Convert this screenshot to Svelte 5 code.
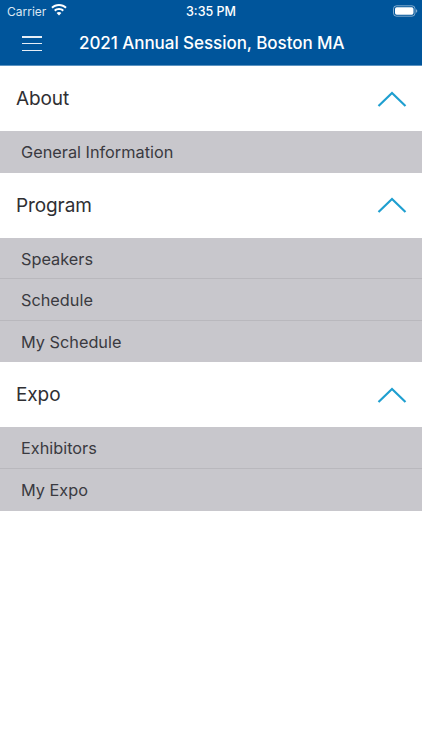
<script>
	const sections = [
		{ title: 'About', items: ['General Information'] },
		{ title: 'Program', items: ['Speakers', 'Schedule', 'My Schedule'] },
		{ title: 'Expo', items: ['Exhibitors', 'My Expo'] }
	];
</script>

<div class="page">
	<header>
		<div class="status">
			<div class="carrier">
				<span>Carrier</span>
				<svg width="16" height="12" viewBox="0 0 16 12" fill="#fff">
					<path d="M8 0C5 0 2.300 1.200.3 3.100l1.400 1.500C3.300 3 5.500 2.100 8 2.100s4.700.9 6.300 2.500l1.400-1.500C13.700 1.200 11 0 8 0z" />
					<path d="M8 4c-1.900 0-3.600.7-4.900 1.900l1.400 1.500C5.400 6.600 6.600 6.100 8 6.100s2.600.5 3.500 1.300l1.400-1.500C11.600 4.700 9.900 4 8 4z" />
					<path d="M8 8c-.9 0-1.800.3-2.400.9L8 11.500l2.400-2.600C9.800 8.300 8.900 8 8 8z" />
				</svg>
			</div>
			<span class="time">3:35 PM</span>
			<div class="battery">
				<svg width="25" height="12" viewBox="0 0 25 12">
					<rect x="0.5" y="0.8" width="21.500" height="10.400" rx="3" fill="none" stroke="#fff" stroke-opacity="0.5" />
					<rect x="2" y="2.300" width="18.500" height="7.400" rx="1.700" fill="#fff" />
					<path d="M23 4.200v3.600c.8-.3 1.300-1 1.300-1.800S23.800 4.500 23 4.200z" fill="#fff" fill-opacity="0.5" />
				</svg>
			</div>
		</div>
		<div class="nav">
			<button class="menu" aria-label="Menu">
				<span></span>
				<span></span>
				<span></span>
			</button>
			<h1>2021 Annual Session, Boston MA</h1>
		</div>
	</header>

	<main>
		{#each sections as section}
			<section>
				<div class="head">
					<h2>{section.title}</h2>
					<svg width="30" height="18" viewBox="0 0 30 18" fill="none" stroke="#1f9fd0" stroke-width="2.200">
						<path d="M1.500 16 15 3l13.500 13" />
					</svg>
				</div>
				<ul>
					{#each section.items as item}
						<li>{item}</li>
					{/each}
				</ul>
			</section>
		{/each}
	</main>
</div>

<style>
	:global(body) {
		margin: 0;
		background: #fff;
		font-family: Inter, 'Liberation Sans', sans-serif;
	}

	.page {
		width: 422px;
		height: 750px;
		overflow: hidden;
		background: #fff;
	}

	header {
		height: 65px;
		background: #00559b;
		color: #fff;
		border-bottom: 1px solid #5b93c1;
	}

	.status {
		height: 22px;
		display: grid;
		grid-template-columns: 1fr auto 1fr;
		align-items: center;
		padding: 0 4px 0 7px;
		font-size: 12px;
	}

	.carrier {
		display: flex;
		align-items: center;
		gap: 5px;
		color: #dbe7f2;
	}

	.carrier svg {
		margin-top: -2px;
	}

	.time {
		font-size: 12.500px;
		font-weight: 500;
		margin-left: -3px;
	}

	.battery {
		display: flex;
		justify-content: flex-end;
	}

	.nav {
		height: 43px;
		display: flex;
		align-items: center;
		padding-left: 22px;
	}

	.menu {
		width: 20px;
		height: 15px;
		padding: 0;
		border: 0;
		background: none;
		display: flex;
		flex-direction: column;
		justify-content: space-between;
	}

	.menu span {
		display: block;
		height: 1.500px;
		background: #e6eef6;
	}

	h1 {
		margin: -1px 0 0 37px;
		font-size: 17px;
		font-weight: 500;
		line-height: 20px;
		letter-spacing: -0.05px;
		white-space: nowrap;
	}

	.head {
		height: 65px;
		display: flex;
		align-items: center;
		justify-content: space-between;
		padding: 0 15px 0 16px;
		box-sizing: border-box;
	}

	h2 {
		margin: 0;
		font-size: 19px;
		font-weight: 400;
		line-height: 25px;
		color: #2f2f33;
		letter-spacing: -0.1px;
	}

	ul {
		margin: 0;
		padding: 0;
		list-style: none;
		background: #c8c7cc;
	}

	li {
		height: 41.600px;
		line-height: 42px;
		padding-left: 21px;
		box-sizing: border-box;
		font-size: 16.300px;
		color: #3a3a40;
		border-bottom: 1px solid #b9b8bd;
	}

	li:last-child {
		border-bottom: 0;
	}
</style>
